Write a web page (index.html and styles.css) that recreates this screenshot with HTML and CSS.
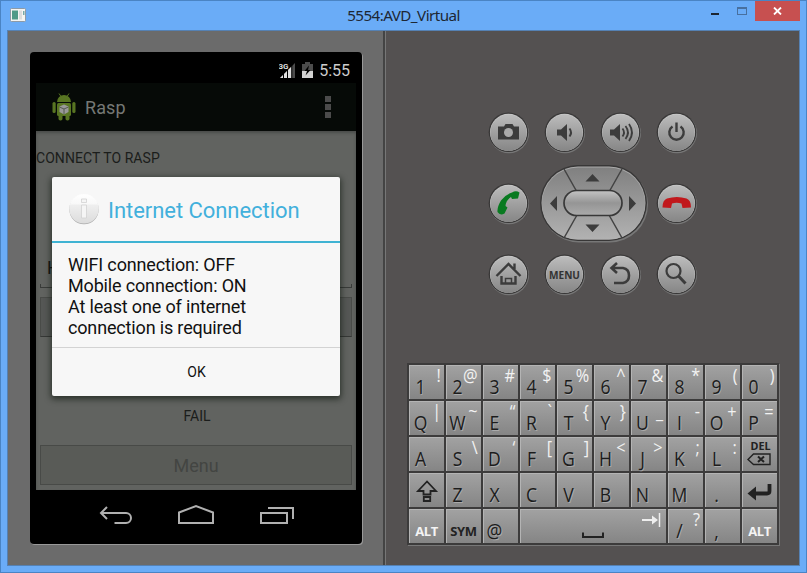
FILE: index.html
```html
<!DOCTYPE html>
<html lang="en">
<head>
<meta charset="utf-8">
<title>5554:AVD_Virtual</title>
<link rel="stylesheet" href="styles.css">
</head>
<body>
<div class="window">
  <header class="titlebar">
    <svg class="app-icon" width="16" height="14" viewBox="0 0 16 14"><rect x=".5" y=".5" width="15" height="13" rx="1" fill="#f4f4f2" stroke="#8d9aa6"/><rect x="2" y="2.500" width="6" height="9" fill="#4f9a88"/><rect x="9" y="2.500" width="3" height="9" fill="#dcdcdc"/><rect x="13" y="3" width="1.500" height="4" fill="#7aa"/></svg>
    <h1 class="title">5554:AVD_Virtual</h1>
    <div class="controls">
      <span class="minimize"></span>
      <span class="maximize"></span>
      <span class="close"><svg width="9" height="8" viewBox="0 0 9 8"><path d="M1 .5l7 7M8 .5l-7 7" stroke="#fff" stroke-width="1.800"/></svg></span>
    </div>
  </header>
  <main class="client">
    <section class="device-pane">
      <div class="phone">
        <div class="status">
          <svg width="17" height="16" viewBox="0 0 17 16"><path d="M1 16l15-15v15z" fill="#4c4c4c"/><path d="M1 16L12.500 4.500V16z" fill="#e0e0e0"/><path d="M4.500 9v7M8.500 5v11M12.800 1v15" stroke="#000" stroke-width="1"/><text x="-.5" y="7.200" class="net">3G</text></svg>
          <svg class="battery" width="11" height="16" viewBox="0 0 11 16"><path d="M3 0h5v2h3v14H0V2h3z" fill="#4c4c4c"/><path d="M0 9h11v7H0z" fill="#d2d2d2"/><path d="M7 3.500L2.500 9H5l-1.500 4.500L8.500 8H6z" fill="#000"/></svg>
          <span class="clock">5:55</span>
        </div>
        <div class="actionbar">
          <svg class="robot" width="24" height="28" viewBox="0 0 24 28"><g fill="#587522"><path d="M5 9a7 7 0 0 1 14 0z"/><path d="M7 .5l2 3M17 .5l-2 3" stroke="#587522"/><rect x="5" y="10" width="14" height="13" rx="1.500"/><rect x=".5" y="9" width="3.200" height="11" rx="1.500"/><rect x="20.300" y="9" width="3.200" height="11" rx="1.500"/><rect x="6.500" y="20" width="4" height="7.500" rx="1.800"/><rect x="13.500" y="20" width="4" height="7.500" rx="1.800"/></g><path d="M12 11.500l4.500 2v5.500L12 21.500 7.500 19v-5.500z" fill="#999"/><path d="M7.500 14L12 16l4.500-2M12 16v5" fill="none" stroke="#555a50"/></svg>
          <span class="app-name">Rasp</span>
          <span class="overflow"><i></i><i></i><i></i></span>
        </div>
        <div class="content">
          <p class="label">CONNECT TO RASP</p>
          <div class="field">H</div>
          <div class="button"></div>
          <p class="fail">FAIL</p>
          <div class="button menu">Menu</div>
          <div class="dialog">
            <div class="dialog-head">
              <svg width="32" height="32" viewBox="0 0 32 32"><defs><linearGradient id="info" x2="0" y2="1"><stop offset="0" stop-color="#fff"/><stop offset=".35" stop-color="#f8f8f8"/><stop offset=".36" stop-color="#efefef"/><stop offset="1" stop-color="#dcdcdc"/></linearGradient></defs><circle cx="16" cy="16.500" r="14.700" fill="#aaa"/><circle cx="16" cy="15.800" r="14.800" fill="url(#info)"/><path d="M13.500 6h5v3.500h-5zM13.500 12h5v13h-5z" fill="#f5f5f5" stroke="#d2d2d2" stroke-width=".8"/></svg>
              <h2>Internet Connection</h2>
            </div>
            <p class="message">WIFI connection: OFF<br>Mobile connection: ON<br>At least one of internet<br>connection is required</p>
            <div class="ok">OK</div>
          </div>
        </div>
        <svg class="nav" width="320" height="48" viewBox="0 0 320 48" fill="none" stroke="#b0b0b0" stroke-width="2"><path d="M71 17l-6 6 6 6M65 23h25a5 5 0 0 1 0 10H78.500"/><path d="M143 22.500l17-6.500 17 6.500V33h-34z"/><path d="M225 23h26v10h-26zM232 18h25v11"/></svg>
      </div>
    </section>
    <section class="control-pane">
      <svg width="0" height="0" class="defs"><defs>
        <linearGradient id="metal" x2="0" y2="1"><stop offset="0" stop-color="#bcbcbc"/><stop offset=".5" stop-color="#a0a0a0"/><stop offset="1" stop-color="#868686"/></linearGradient>
        <linearGradient id="pad" x2="0" y2="1"><stop offset="0" stop-color="#808080"/><stop offset="1" stop-color="#b2b2b2"/></linearGradient>
        <linearGradient id="pill" x2="0" y2="1"><stop offset="0" stop-color="#c4c4c4"/><stop offset=".5" stop-color="#959595"/><stop offset="1" stop-color="#ababab"/></linearGradient>
        <g id="disc"><circle cx="21" cy="21.200" r="20" fill="#777"/><circle cx="20.500" cy="20.300" r="19.800" fill="#383737"/><circle cx="20.500" cy="20.300" r="18.500" fill="#c8c8c8"/><circle cx="20.500" cy="20.800" r="18.200" fill="url(#metal)"/></g>
      </defs></svg>
      <div class="buttons">
        <svg class="rb" viewBox="0 0 41 42"><use href="#disc"/><path d="M10 14.500h6l1.500-2.500h7l1.500 2.500h5v13H10z" fill="#3c3c3c"/><circle cx="20.500" cy="20.500" r="4.500" fill="#aaa"/></svg>
        <svg class="rb" viewBox="0 0 41 42"><use href="#disc"/><path d="M13 17.500h4l6-5.500v17l-6-5.500h-4z" fill="#3c3c3c"/><path d="M25.500 16.500q3 4 0 8" fill="none" stroke="#3c3c3c" stroke-width="2"/></svg>
        <svg class="rb" viewBox="0 0 41 42"><use href="#disc"/><path d="M10 17.500h4l6-5.500v17l-6-5.500h-4z" fill="#3c3c3c"/><path d="M22.500 16.500q3 4 0 8M25.500 14q5 6.500 0 13M29 12q6 8.500 0 17" fill="none" stroke="#3c3c3c" stroke-width="1.800"/></svg>
        <svg class="rb" viewBox="0 0 41 42"><use href="#disc"/><path d="M16.500 14.500a7.200 7.200 0 1 0 8 0M20.500 10.500v9.500" fill="none" stroke="#3c3c3c" stroke-width="2.400"/></svg>
        <svg class="rb" viewBox="0 0 41 42"><use href="#disc"/><path d="M24 9.500Q28 7 31.500 9.500l-1.500 6-6 .5-1-2Q18 17 17.500 23l2 1.500-3 6Q12 33 9.500 29 9 24 13 17.500 17.500 11.500 24 9.500z" fill="#087a20"/></svg>
        <svg class="dpad" width="108" height="78" viewBox="0 0 108 78"><rect x="1" y="1.500" width="107" height="76" rx="38" fill="#777"/><rect x="0" y="0" width="107" height="76" rx="38" fill="#383737"/><rect x="1.500" y="1.500" width="104" height="73" rx="36.500" fill="#aaa"/><rect x="2" y="2.500" width="103" height="72" rx="36" fill="url(#pad)"/><path d="M24 4l13 23M82 4L69 27M24 73l13-23M82 73L69 50" stroke="#434343" stroke-width="1.500"/><rect x="24" y="25.500" width="58" height="25" rx="12.500" fill="url(#pill)" stroke="#383838" stroke-width="1.700"/><path d="M45.500 16.500h14l-7-7.500zM45.500 59.500h14l-7 7.500zM17 31v15l-7-7.500zM89 31v15l7-7.500z" fill="#3c3c3c"/></svg>
        <svg class="rb" viewBox="0 0 41 42"><use href="#disc"/><path d="M6.500 24.500Q6.500 17 11 15.500q10-3 19.500 0 4.500 1.500 4.500 9l-8.500.5-1-4.500q-5-1.500-9.500 0L15 25z" fill="#c1181c"/></svg>
        <svg class="rb" viewBox="0 0 41 42"><use href="#disc"/><path d="M8.500 22L20.500 10l12 12M26.500 9.500v5.500M13.500 22v7.500h14V22" fill="none" stroke="#3c3c3c" stroke-width="2.400"/><path d="M17.500 29v-4.500h6V29" fill="none" stroke="#3c3c3c" stroke-width="1.500"/></svg>
        <svg class="rb" viewBox="0 0 41 42"><use href="#disc"/><text x="20.500" y="25" class="menu-text" textLength="31" lengthAdjust="spacingAndGlyphs">MENU</text></svg>
        <svg class="rb" viewBox="0 0 41 42"><use href="#disc"/><path d="M17 9l-5.500 5 5.500 5M12 14h11q6 1 6 7.500T23 29h-9" fill="none" stroke="#3c3c3c" stroke-width="2.600"/></svg>
        <svg class="rb" viewBox="0 0 41 42"><use href="#disc"/><circle cx="17.500" cy="17" r="7" fill="none" stroke="#3c3c3c" stroke-width="2.200"/><path d="M22.500 22l7 7.500" stroke="#3c3c3c" stroke-width="3"/></svg>
      </div>
      <div class="keyboard">
        <div class="key"><b>1</b><s>!</s></div><div class="key"><b>2</b><s>@</s></div><div class="key"><b>3</b><s>#</s></div><div class="key"><b>4</b><s>$</s></div><div class="key"><b>5</b><s>%</s></div><div class="key"><b>6</b><s>^</s></div><div class="key"><b>7</b><s>&amp;</s></div><div class="key"><b>8</b><s>*</s></div><div class="key"><b>9</b><s>(</s></div><div class="key"><b>0</b><s>)</s></div>
        <div class="key"><b>Q</b><s>|</s></div><div class="key"><b>W</b><s>~</s></div><div class="key"><b>E</b><s>“</s></div><div class="key"><b>R</b><s>`</s></div><div class="key"><b>T</b><s>{</s></div><div class="key"><b>Y</b><s>}</s></div><div class="key"><b>U</b><s>_</s></div><div class="key"><b>I</b><s>-</s></div><div class="key"><b>O</b><s>+</s></div><div class="key"><b>P</b><s>=</s></div>
        <div class="key"><b>A</b></div><div class="key"><b>S</b><s>\</s></div><div class="key"><b>D</b><s>‘</s></div><div class="key"><b>F</b><s>[</s></div><div class="key"><b>G</b><s>]</s></div><div class="key"><b>H</b><s>&lt;</s></div><div class="key"><b>J</b><s>&gt;</s></div><div class="key"><b>K</b><s>;</s></div><div class="key"><b>L</b><s>:</s></div>
        <div class="key"><svg width="35" height="34" viewBox="0 0 35 34"><text x="18.500" y="13" class="del" textLength="20" lengthAdjust="spacingAndGlyphs">DEL</text><path d="M6 22.500L11.500 17H28v10.500H11.500z" fill="none" stroke="#222" stroke-width="1.400"/><path d="M16 19.500l6 5.500M22 19.500L16 25" stroke="#222" stroke-width="2"/></svg></div>
        <div class="key"><svg width="35" height="34" viewBox="0 0 35 34" fill="none" stroke="#222" stroke-width="1.800"><path d="M18 8.500L9 18h5.500v3.500h7V18H27zM14.800 24h6.400v4h-6.400z"/></svg></div><div class="key"><b>Z</b></div><div class="key"><b>X</b></div><div class="key"><b>C</b></div><div class="key"><b>V</b></div><div class="key"><b>B</b></div><div class="key"><b>N</b></div><div class="key"><b>M</b></div><div class="key"><b>.</b></div>
        <div class="key"><svg width="35" height="34" viewBox="0 0 35 34"><path d="M27.500 11v7q0 2.500-2.500 2.500H12" fill="none" stroke="#222" stroke-width="3.800"/><path d="M5.500 20.500L14 13.500v14z" fill="#222"/></svg></div>
        <div class="key word light">ALT</div><div class="key word">SYM</div><div class="key"><b>@</b></div>
        <div class="key space"><svg width="146" height="34" viewBox="0 0 146 34" fill="none"><path d="M63 23.500v4.500h20v-4.500" stroke="#222" stroke-width="2"/><path d="M122 11h12" stroke="#eee" stroke-width="2"/><path d="M132 6.500l6 4.500-6 4.500z" fill="#eee"/><path d="M139.500 4v14" stroke="#eee" stroke-width="1.500"/></svg></div>
        <div class="key"><b>/</b><s>?</s></div><div class="key"><b>,</b></div><div class="key word light">ALT</div>
      </div>
    </section>
  </main>
</div>
</body>
</html>
```
FILE: styles.css
```css
* { box-sizing: border-box; }
body { margin: 0; }
h1, h2, p { margin: 0; font-weight: 400; }
svg { display: block; flex: none; }

.window {
  width: 807px;
  height: 573px;
  background: #6aacf7;
  border: 1px solid #4a84c4;
  padding: 0 6px 6px;
  display: flex;
  flex-direction: column;
}
.titlebar {
  height: 29px;
  flex: none;
  display: grid;
  grid-template-columns: 100px 1fr 100px;
}
.app-icon { margin: 7px 0 0 3px; }
.title {
  font: 15.2px/28px "Noto Sans", sans-serif;
  letter-spacing: -.55px;
  text-align: center;
  color: #1d2733;
}
.controls { display: flex; }
.minimize { width: 8px; height: 2px; margin: 12px 0 0 11px; background: #1c2632; }
.maximize { width: 10px; height: 8px; margin: 6px 0 0 18px; border: 1px solid #48709f; border-top-width: 2px; }
.close {
  width: 45px;
  height: 20px;
  margin-left: 8px;
  background: #c75050;
  display: flex;
  align-items: center;
  justify-content: center;
}
.client {
  flex: 1;
  border: 1px solid #5581b3;
  display: flex;
  background: #545151;
}
.device-pane {
  width: 377px;
  background: #6b6b6b;
  border-right: 2px solid #444;
  padding: 21px 0 0 22px;
}
.phone {
  width: 332px;
  height: 492px;
  padding: 5px 6px;
  background: #000;
  border-radius: 4px;
  box-shadow: 1px 1px 0 #999;
  font-family: Roboto, sans-serif;
}
.status {
  height: 26px;
  display: flex;
  justify-content: flex-end;
  padding: 5px 6px 0 0;
}
.net { font: 700 8px Roboto, sans-serif; fill: #ddd; }
.battery { margin: 0 6px; }
.clock { font-size: 16px; line-height: 18px; color: #ccc; }
.actionbar {
  height: 48px;
  background: #060a07;
  display: flex;
  align-items: center;
  padding: 0 25px 0 16px;
}
.app-name { margin-left: 9px; font-size: 18px; letter-spacing: .1px; color: #757875; }
.overflow { margin-left: auto; display: grid; gap: 2px; }
.overflow i { width: 6px; height: 6px; background: #4b4b4b; }
.content {
  position: relative;
  height: 359px;
  background: #616360;
  box-shadow: inset 0 2px 3px #4a4c4a;
  padding: 18px 4px 4px;
}
.label { margin-left: -4px; font-size: 14px; line-height: 18px; letter-spacing: .05px; color: #1b1d1b; }
.field {
  height: 25px;
  margin-top: 96px;
  padding-left: 6px;
  border: solid #393b39;
  border-width: 0 1px 1px;
  border-image: linear-gradient(#616360 85%, #393b39 85%) 1;
  font-size: 18px;
  line-height: 10px;
  color: #151715;
}
.button {
  height: 40px;
  margin-top: 9px;
  background: #555755;
  border: 1px solid #494b48;
  border-bottom-color: #363836;
}
.fail { margin-top: 70px; padding-left: 2px; text-align: center; font-size: 14px; line-height: 18px; color: #1b1d1b; }
.menu {
  margin-top: 20px;
  background: #595b57;
  border: 1px solid #484a47;
  font-size: 18px;
  line-height: 39px;
  text-align: center;
  color: #434542;
}
.dialog {
  position: absolute;
  left: 16px;
  top: 46px;
  width: 288px;
  height: 219px;
  background: #f7f7f7;
  border-radius: 2px;
  box-shadow: 0 2px 6px 1px rgba(10, 20, 10, .65);
}
.dialog-head {
  height: 66px;
  padding-left: 16px;
  display: flex;
  align-items: center;
  border-bottom: 2px solid #3fb3d3;
}
.dialog-head h2 { margin: 2px 0 0 8px; font-size: 22px; letter-spacing: -.05px; color: #42b0dc; }
.message { height: 104px; padding: 11px 16px 0; font-size: 18px; line-height: 21px; letter-spacing: -.16px; color: #111; }
.ok { height: 49px; padding-left: 1px; border-top: 1px solid #d3d3d3; font-size: 14px; line-height: 48px; text-align: center; color: #111; }

.control-pane { flex: 1; border-left: 1px solid #777; }
.defs { position: absolute; }
.buttons {
  display: grid;
  grid-template-columns: repeat(4, 41px);
  grid-template-rows: repeat(3, 42px);
  gap: 29px 15px;
  margin: 81px 0 0 102px;
}
.rb { width: 41px; height: 42px; }
.dpad { grid-column: 2 / 4; margin: -18px 0 0 -4px; }
.menu-text { font: 700 11px "Noto Sans", sans-serif; text-anchor: middle; fill: #333; }
.keyboard {
  width: 372px;
  margin: 67px 0 0 21px;
  padding: 2px;
  display: grid;
  grid-template-columns: repeat(10, 35px);
  grid-auto-rows: 34px;
  gap: 2px;
  background: #3c3b3b;
  box-shadow: 1px 1px 0 #777;
  font-family: "Open Sans", sans-serif;
}
.key {
  display: grid;
  background: linear-gradient(#a2a2a2, #858585);
  box-shadow: inset 1px 1px 0 #b4b4b4;
}
.key > * { grid-area: 1 / 1; text-decoration: none; }
.key b { width: 23px; height: 22px; text-align: center; font-size: 20px; font-weight: 400; line-height: 22px; margin-top: 11px; color: #1c1c1c; text-shadow: 1px 1px 0 #aaa; transform: scaleX(.88); }
.key s { justify-self: end; margin: 0 3px 0 0; height: 20px; font-size: 18.500px; line-height: 20px; color: #f2f2f2; transform: scaleX(.88); transform-origin: right; }
.space { grid-column: span 4; }
.word { font: 700 13px/20px "Open Sans", sans-serif; letter-spacing: -.4px; text-align: center; padding-top: 12px; color: #222; }
.light { color: #f4f4f4; }
.del { font: 700 11px "Noto Sans", sans-serif; text-anchor: middle; fill: #222; }
```
